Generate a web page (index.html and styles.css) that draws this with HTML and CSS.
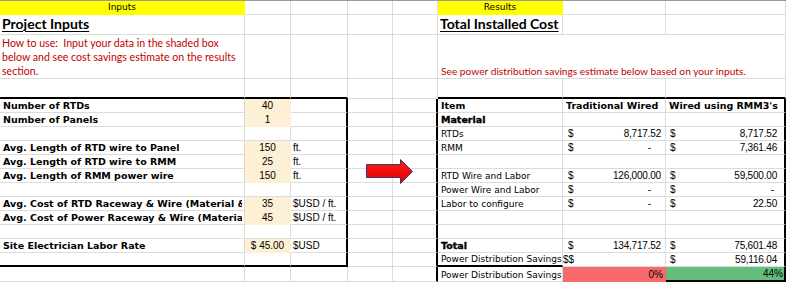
FILE: index.html
```html
<!DOCTYPE html>
<html>
<head>
<meta charset="utf-8">
<title>Project Inputs</title>
<link rel="stylesheet" href="styles.css">
</head>
<body>
<div class="page">
  <div class="sheet">
    <!-- row 1 -->
    <div class="c hdr">Inputs</div><div class="c"></div><div class="c"></div><div class="c"></div><div class="c"></div>
    <div class="c hdr">Results</div><div class="c"></div><div class="c"></div>
    <!-- row 2 -->
    <div class="c title"><span>Project Inputs</span></div><div class="c"></div><div class="c"></div><div class="c"></div><div class="c"></div>
    <div class="c title"><span>Total Installed Cost</span></div><div class="c"></div><div class="c"></div>
    <!-- row 3 -->
    <div class="c note">How to use:&nbsp; Input your data in the shaded box<br>below and see cost savings estimate on the results<br>section.</div>
    <div class="c"></div><div class="c"></div><div class="c"></div><div class="c"></div>
    <div class="c note2">See power distribution savings estimate below based on your inputs.</div>
    <!-- row 4 -->
    <div class="c kb"></div><div class="c kb"></div><div class="c kb"></div><div class="c"></div><div class="c"></div>
    <div class="c kb"></div><div class="c kb"></div><div class="c kb"></div>
    <!-- row 5 -->
    <div class="c lbl">Number of RTDs</div><div class="c in">40</div><div class="c kr"></div><div class="c"></div><div class="c kr"></div>
    <div class="c ith">Item</div><div class="c ith">Traditional Wired</div><div class="c ith kr">Wired using RMM3's</div>
    <!-- row 6 -->
    <div class="c lbl">Number of Panels</div><div class="c in">1</div><div class="c kr"></div><div class="c"></div><div class="c kr"></div>
    <div class="c it heavy">Material</div><div class="c"></div><div class="c kr"></div>
    <!-- row 7 -->
    <div class="c"></div><div class="c"></div><div class="c kr"></div><div class="c"></div><div class="c kr"></div>
    <div class="c it">RTDs</div>
    <div class="c acct g"><span>$</span><span class="num">8,717.52</span></div>
    <div class="c acct h kr"><span>$</span><span class="num">8,717.52</span></div>
    <!-- row 8 -->
    <div class="c lbl">Avg. Length of RTD wire to Panel</div><div class="c in">150</div><div class="c unit kr">ft.</div><div class="c"></div><div class="c kr"></div>
    <div class="c it">RMM</div>
    <div class="c acct g"><span>$</span><span class="dash g">-</span></div>
    <div class="c acct h kr"><span>$</span><span class="num">7,361.46</span></div>
    <!-- row 9 -->
    <div class="c lbl">Avg. Length of RTD wire to RMM</div><div class="c in">25</div><div class="c unit kr">ft.</div><div class="c"></div><div class="c kr"></div>
    <div class="c"></div><div class="c"></div><div class="c kr"></div>
    <!-- row 10 -->
    <div class="c lbl">Avg. Length of RMM power wire</div><div class="c in">150</div><div class="c unit kr">ft.</div><div class="c"></div><div class="c kr"></div>
    <div class="c it">RTD Wire and Labor</div>
    <div class="c acct g"><span>$</span><span class="num">126,000.00</span></div>
    <div class="c acct h kr"><span>$</span><span class="num">59,500.00</span></div>
    <!-- row 11 -->
    <div class="c"></div><div class="c"></div><div class="c kr"></div><div class="c"></div><div class="c kr"></div>
    <div class="c it">Power Wire and Labor</div>
    <div class="c acct g"><span>$</span><span class="dash g">-</span></div>
    <div class="c acct h kr"><span>$</span><span class="dash h">-</span></div>
    <!-- row 12 -->
    <div class="c lbl"><span class="clip">Avg. Cost of RTD Raceway &amp; Wire (Material &amp;</span></div><div class="c in">35</div><div class="c unit kr">$USD / ft.</div><div class="c"></div><div class="c kr"></div>
    <div class="c it">Labor to configure</div>
    <div class="c acct g"><span>$</span><span class="dash g">-</span></div>
    <div class="c acct h kr"><span>$</span><span class="num">22.50</span></div>
    <!-- row 13 -->
    <div class="c lbl"><span class="clip">Avg. Cost of Power Raceway &amp; Wire (Materia</span></div><div class="c in">45</div><div class="c unit kr">$USD / ft.</div><div class="c"></div><div class="c kr"></div>
    <div class="c"></div><div class="c"></div><div class="c kr"></div>
    <!-- row 14 -->
    <div class="c"></div><div class="c"></div><div class="c kr"></div><div class="c"></div><div class="c kr"></div>
    <div class="c"></div><div class="c"></div><div class="c kr"></div>
    <!-- row 15 -->
    <div class="c lbl">Site Electrician Labor Rate</div><div class="c in">$ 45.00</div><div class="c unit kr">$USD</div><div class="c"></div><div class="c kr"></div>
    <div class="c it heavy">Total</div>
    <div class="c acct g"><span>$</span><span class="num">134,717.52</span></div>
    <div class="c acct h kr"><span>$</span><span class="num">75,601.48</span></div>
    <!-- row 16 -->
    <div class="c kb"></div><div class="c kb"></div><div class="c kb kr"></div><div class="c"></div><div class="c kr"></div>
    <div class="c it kb">Power Distribution Savings</div>
    <div class="c it dd">$$</div>
    <div class="c acct h kr"><span>$</span><span class="num">59,116.04</span></div>
    <!-- row 17 -->
    <div class="c"></div><div class="c"></div><div class="c"></div><div class="c"></div><div class="c kr"></div>
    <div class="c it">Power Distribution Savings</div>
    <div class="c pct red">0%</div>
    <div class="c pct green kr kb">44%</div>
  </div>
  <svg class="arrow" width="48" height="26" viewBox="0 0 48 26" aria-hidden="true">
    <defs>
      <linearGradient id="ag" x1="0" y1="0" x2="0" y2="1">
        <stop offset="0" stop-color="#ff1a1a"/>
        <stop offset="1" stop-color="#e80000"/>
      </linearGradient>
    </defs>
    <polygon points="0.5,5.5 34.5,5.5 34.5,0.5 46.5,12.5 34.5,24.5 34.5,18.5 0.5,18.5" fill="url(#ag)" stroke="#3e3868" stroke-width="1"/>
  </svg>
</div>
</body>
</html>
```

FILE: styles.css
```css
html, body {
  margin: 0;
  padding: 0;
  background: #ffffff;
}

body {
  width: 786px;
  height: 283px;
  overflow: hidden;
  font-family: "DejaVu Sans", sans-serif;
  font-size: 9px;
  color: #000000;
}

.page {
  position: relative;
  border-top: 1px solid #9b9b9b;
}

.sheet {
  display: grid;
  grid-template-columns: 245px 46px 57px 45px 45px 125px 103px 120px;
  grid-template-rows: 14px 20px 44px 20px repeat(12, 14px) 15px;
}

.c {
  box-sizing: border-box;
  min-width: 0;
  border-right: 1px solid #dadcdd;
  border-bottom: 1px solid #dadcdd;
  overflow: hidden;
  white-space: nowrap;
  display: flex;
  align-items: flex-end;
  padding: 0 2px 0 3px;
  line-height: 12px;
}

/* thick box borders */
.kb { border-bottom: 2px solid #000000; }
.kr { border-right: 2px solid #000000; }

/* yellow section headers */
.hdr {
  background: #ffff00;
  border-right-color: #ffff00;
  border-bottom-color: #ffff00;
  justify-content: center;
  align-items: flex-start;
  padding: 0;
}

/* underlined titles */
.title {
  align-items: flex-start;
  font-family: "Lato", "Liberation Sans", sans-serif;
  font-weight: 700;
  font-size: 14px;
  line-height: 17px;
  padding-left: 2px;
}
.title span {
  text-decoration: underline;
  text-decoration-thickness: 1px;
  text-underline-offset: 2px;
}

/* red instruction text */
.note {
  display: block;
  font-family: "Lato", "Liberation Sans", sans-serif;
  font-size: 10.6px;
  line-height: 14px;
  color: #c00000;
  padding: 1px 0 0 2px;
}
.note2 {
  grid-column: span 3;
  font-family: "Lato", "Liberation Sans", sans-serif;
  font-size: 10.2px;
  line-height: 14px;
  color: #c00000;
  padding-left: 3px;
}

/* input labels */
.lbl {
  font-weight: 700;
  font-size: 9.5px;
}
.clip {
  display: block;
  overflow: hidden;
  max-width: 100%;
}

/* shaded input values */
.in {
  background: #fdf0d5;
  border-right-color: #fdf0d5;
  border-bottom-color: #fdf0d5;
  justify-content: center;
  font-family: "Liberation Sans", sans-serif;
  font-size: 10px;
  padding: 0;
}

.unit {
  font-family: "Liberation Sans", sans-serif;
  font-size: 10px;
  padding-left: 2px;
}

/* results table */
.it {
  padding-left: 3px;
}
.ith {
  font-weight: 700;
  font-size: 9.5px;
  padding-left: 3px;
}
.heavy {
  font-weight: 700;
  font-size: 9.5px;
  -webkit-text-stroke: 0.35px #000000;
}

.acct {
  justify-content: space-between;
  font-family: "Liberation Sans", sans-serif;
  font-size: 10px;
}
.acct.g { padding: 0 4px 0 5px; }
.acct.h { padding: 0 7px 0 4px; }

.num {
  letter-spacing: -0.2px;
}
.dash.g { margin-right: 10px; }
.dash.h { margin-right: 3px; }

.dd {
  font-family: "Liberation Sans", sans-serif;
  font-size: 10px;
  padding-left: 0;
}

.pct {
  justify-content: flex-end;
  font-family: "Liberation Sans", sans-serif;
  font-size: 10px;
  padding-right: 2px;
}
.red {
  background: #f8696b;
  border-right-color: #f8696b;
  border-bottom-color: #f8696b;
}
.green {
  background: #63be7b;
  padding-right: 1px;
}

/* decorative arrow lying over the grid */
.arrow {
  position: absolute;
  left: 366px;
  top: 158px;
}
```
